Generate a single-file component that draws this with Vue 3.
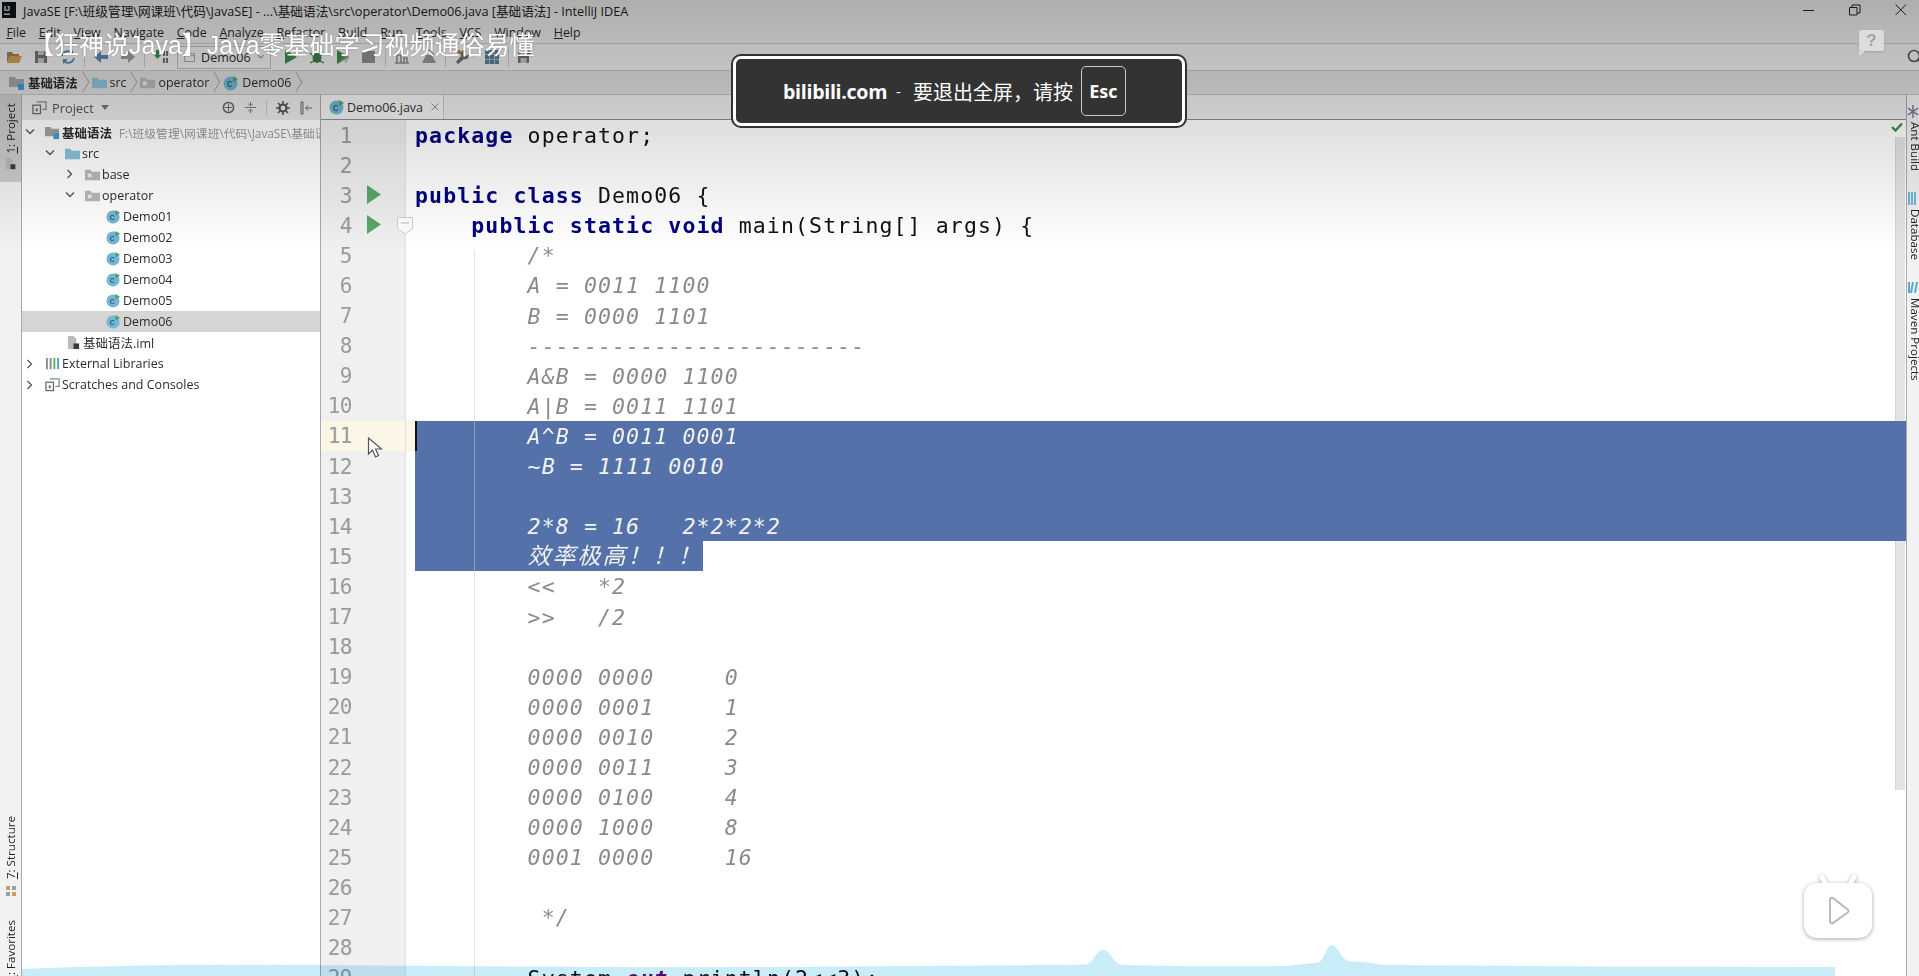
<script setup>
const menu = ['File','Edit','View','Navigate','Code','Analyze','Refactor','Build','Run','Tools','VCS','Window','Help']
const tree = [
  { pad: 1, arrow: 'down', icon: 'mod', text: '基础语法', bold: true, path: 'F:\\班级管理\\网课班\\代码\\JavaSE\\基础语法' },
  { pad: 21, arrow: 'down', icon: 'src', text: 'src' },
  { pad: 41, arrow: 'right', icon: 'pkg', text: 'base' },
  { pad: 41, arrow: 'down', icon: 'pkg', text: 'operator' },
  { pad: 62, arrow: 'none', icon: 'cls', text: 'Demo01' },
  { pad: 62, arrow: 'none', icon: 'cls', text: 'Demo02' },
  { pad: 62, arrow: 'none', icon: 'cls', text: 'Demo03' },
  { pad: 62, arrow: 'none', icon: 'cls', text: 'Demo04' },
  { pad: 62, arrow: 'none', icon: 'cls', text: 'Demo05' },
  { pad: 62, arrow: 'none', icon: 'cls', text: 'Demo06', active: true },
  { pad: 22, arrow: 'none', icon: 'iml', text: '基础语法.iml' },
  { pad: 1, arrow: 'right', icon: 'lib', text: 'External Libraries' },
  { pad: 1, arrow: 'right', icon: 'scr', text: 'Scratches and Consoles' }
]
const c = t => [[t, 'cm']]
const I = '        '
const lines = [
  [['package', 'kw'], [' operator;', '']],
  [],
  [['public class', 'kw'], [' Demo06 {', '']],
  [['    '], ['public static void', 'kw'], [' main(String[] args) {', '']],
  c(I + '/*'),
  c(I + 'A = 0011 1100'),
  c(I + 'B = 0000 1101'),
  c(I + '------------------------'),
  c(I + 'A&B = 0000 1100'),
  c(I + 'A|B = 0011 1101'),
  c(I + 'A^B = 0011 0001'),
  c(I + '~B = 1111 0010'),
  [],
  c(I + '2*8 = 16   2*2*2*2'),
  [[I, ''], ['效率极高！！！', 'cm cjk']],
  c(I + '<<   *2'),
  c(I + '>>   /2'),
  [],
  c(I + '0000 0000     0'),
  c(I + '0000 0001     1'),
  c(I + '0000 0010     2'),
  c(I + '0000 0011     3'),
  c(I + '0000 0100     4'),
  c(I + '0000 1000     8'),
  c(I + '0001 0000     16'),
  [],
  c(I + ' */'),
  [],
  [[I + 'System.', ''], ['out', 'st'], ['.println(2<<3);', '']]
].map((segs, i) => ({
  n: i + 1,
  segs,
  sel: i >= 10 && i <= 13,
  part: i === 14,
  cur: i === 10
}))
</script>

<template>
  <div class="page">
    <svg class="defs" width="0" height="0">
      <defs>
        <symbol id="cls" viewBox="0 0 16 16">
          <circle cx="7.5" cy="8.5" r="7" fill="#6fb8d8" />
          <text x="4" y="12" font-size="10.5" font-family="Liberation Sans, sans-serif" fill="#3b3b3b">c</text>
          <path d="M10 1v6l5-3z" fill="#4fa45f" />
        </symbol>
        <symbol id="src" viewBox="0 0 16 16">
          <path d="M0 3h6l1 2h9v9H0z" fill="#8bc3dd" />
        </symbol>
        <symbol id="pkg" viewBox="0 0 16 16">
          <path d="M0 3h6l1 2h9v9H0z" fill="#b6b9bd" />
          <rect x="3" y="7" width="4" height="4" fill="#eee" />
        </symbol>
        <symbol id="mod" viewBox="0 0 16 16">
          <path d="M0 2h6l1 2h8v8H0z" fill="#9fa4a9" />
          <rect x="9" y="9" width="6" height="6" fill="#3d9cd0" />
        </symbol>
        <symbol id="iml" viewBox="0 0 16 16">
          <path d="M2 1h6l3 3v11H2z" fill="#b8bbbf" />
          <rect x="8" y="9" width="6" height="6" fill="#3a3a3a" />
        </symbol>
        <symbol id="lib" viewBox="0 0 16 16">
          <path d="M1 2h2v12H1zM5 2h2v12H5z" fill="#7f8b95" />
          <path d="M9 2h2v12H9z" fill="#62b543" />
          <path d="M13 2h2v12h-2z" fill="#4aa0cc" />
        </symbol>
        <symbol id="scr" viewBox="0 0 16 16">
          <path d="M5 2h10v8h-4" fill="none" stroke="#80868c" stroke-width="1.3" />
          <rect x="1" y="5.5" width="8" height="9" fill="none" stroke="#5f666c" stroke-width="1.3" />
          <rect x="4" y="9" width="2" height="3" fill="#5f666c" />
        </symbol>
      </defs>
    </svg>

    <div class="ide">
      <div class="title">
        <svg class="ij" width="14" height="16" viewBox="0 0 14 16">
          <rect width="14" height="16" fill="#10121c" />
          <rect x="2" y="11.5" width="6" height="1.4" fill="#ddd" />
          <text x="2" y="9" font-size="7" font-weight="700" font-family="Liberation Sans, sans-serif" fill="#fff">IJ</text>
        </svg>
        <span class="title-text">JavaSE [F:\班级管理\网课班\代码\JavaSE] - ...\基础语法\src\operator\Demo06.java [基础语法] - IntelliJ IDEA</span>
        <span class="win">
          <svg width="12" height="12" viewBox="0 0 12 12"><path d="M0 6.5h11" stroke="#222" stroke-width="1" /></svg>
          <svg width="12" height="12" viewBox="0 0 12 12"><path d="M.5 3.5h7.5v7.5H.5zM3 3.5V1h8v8H8" fill="none" stroke="#222" stroke-width="1" /></svg>
          <svg width="12" height="12" viewBox="0 0 12 12"><path d="M.5.5l10.5 10.5M11 .5L.5 11" stroke="#222" stroke-width="1" /></svg>
        </span>
      </div>

      <div class="menu">
        <span v-for="m in menu" :key="m" class="menu-item"><u>{{ m[0] }}</u>{{ m.slice(1) }}</span>
      </div>

      <div class="toolbar">
        <div class="tg">
          <svg width="16" height="16" viewBox="0 0 16 16"><path d="M1 3h5l1 2h6v2H4l-3 7z" fill="#9c8350" /><path d="M4 7h12l-3 7H1z" fill="#d0a050" /></svg>
          <svg width="16" height="16" viewBox="0 0 16 16"><path d="M2 2h10l2 2v10H2z" fill="#707478" /><rect x="5" y="2" width="6" height="4" fill="#c4c4c4" /><rect x="5" y="9" width="6" height="5" fill="#c4c4c4" /></svg>
          <svg width="16" height="16" viewBox="0 0 16 16"><path d="M2 7a6 6 0 0 1 11-2M14 9a6 6 0 0 1-11 2" fill="none" stroke="#5b8fb0" stroke-width="1.8" /><path d="M13 1v5H8zM3 15v-5h5z" fill="#5b8fb0" /></svg>
        </div>
        <i class="sep"></i>
        <div class="tg">
          <svg width="16" height="16" viewBox="0 0 16 16"><path d="M8 2v4h7v4H8v4L1 8z" fill="#5a87ad" /></svg>
          <svg width="16" height="16" viewBox="0 0 16 16"><path d="M8 2v4H1v4h7v4l7-6z" fill="#9c9c9c" /></svg>
        </div>
        <i class="sep"></i>
        <svg width="16" height="16" viewBox="0 0 16 16"><path d="M3 1h3v5h2l-3.500 4L1 6h2z" fill="#3f8c4c" /><path d="M10 2h2v5h-2zM13 2h2v5h-2zM10 9h2v5h-2zM13 9h2v5h-2z" fill="#707070" /></svg>
        <div class="combo">
          <svg width="15" height="15" viewBox="0 0 15 15"><rect x="1" y="2" width="13" height="11" fill="none" stroke="#8a8a8a" /><path d="M1 5h13" stroke="#8a8a8a" /></svg>
          <span>Demo06</span>
          <svg width="10" height="8" viewBox="0 0 10 8"><path d="M1 1.500l4 4 4-4" fill="none" stroke="#555" stroke-width="1.200" /></svg>
        </div>
        <div class="tg run">
          <svg width="16" height="16" viewBox="0 0 16 16"><path d="M2 1l12 7-12 7z" fill="#3f8c4c" /></svg>
          <svg width="16" height="16" viewBox="0 0 16 16"><ellipse cx="8" cy="9" rx="4.500" ry="5" fill="#3f7d4a" /><path d="M1 4l4 3M15 4l-4 3M1 14l4-2M15 14l-4-2" stroke="#3f7d4a" stroke-width="1.300" /></svg>
          <svg width="16" height="16" viewBox="0 0 16 16"><path d="M2 1l12 7-12 7z" fill="#3f8c4c" /><path d="M8 8h6M6 11h6M8 5h3M10 14l4-6" stroke="#b4b4b4" stroke-width="1.200" /></svg>
          <svg width="16" height="16" viewBox="0 0 16 16"><rect x="1" y="2" width="13" height="12" fill="#8f8f8f" /></svg>
        </div>
        <i class="sep"></i>
        <div class="tg">
          <svg width="16" height="16" viewBox="0 0 16 16"><path d="M1 14h14M3 14V6h4v8M10 14V9h3v5" fill="none" stroke="#929292" stroke-width="1.600" /></svg>
          <svg width="16" height="16" viewBox="0 0 16 16"><path d="M1 14h14l-4-8H5z" fill="#979797" /><path d="M7 1l6 5" stroke="#979797" stroke-width="2" /></svg>
        </div>
        <i class="sep"></i>
        <div class="tg wide">
          <svg width="16" height="16" viewBox="0 0 16 16"><path d="M10 1a4 4 0 0 0-3 6l-5 6 2 2 6-5a4 4 0 0 0 5-5l-3 2-2-2 2-3z" fill="#6f6f6f" /><circle cx="5" cy="3" r="2" fill="#c07f2f" /></svg>
          <svg width="16" height="16" viewBox="0 0 16 16"><path d="M1 1h14v14H1z" fill="#4f7f9f" /><path d="M1 5.500h14M1 10.500h14M5.500 1v14M10.500 1v14" stroke="#b8b8b8" /></svg>
        </div>
        <i class="sep"></i>
        <svg width="16" height="16" viewBox="0 0 16 16"><path d="M1 3h9l2 2v9H1z" fill="#707478" /><rect x="3.500" y="3" width="5" height="3" fill="#c4c4c4" /><rect x="3.500" y="9" width="6" height="5" fill="#c4c4c4" /><path d="M11 1l4 3-4 3z" fill="#3f8c4c" /></svg>
        <svg class="search" width="16" height="16" viewBox="0 0 16 16"><circle cx="7" cy="7" r="5.500" fill="none" stroke="#5c5c5c" stroke-width="1.700" /><path d="M11 11l4 4" stroke="#5c5c5c" stroke-width="1.700" /></svg>
      </div>

      <div class="crumbs">
        <span class="crumb">
          <svg width="16" height="16" viewBox="0 0 16 16"><use href="#mod" /></svg>
          <b>基础语法</b>
        </span>
        <span class="crumb">
          <svg width="15" height="15" viewBox="0 0 16 16"><use href="#src" /></svg>
          <span>src</span>
        </span>
        <span class="crumb">
          <svg width="15" height="15" viewBox="0 0 16 16"><use href="#pkg" /></svg>
          <span>operator</span>
        </span>
        <span class="crumb">
          <svg width="16" height="16" viewBox="0 0 16 16"><use href="#cls" /></svg>
          <span>Demo06</span>
        </span>
      </div>

      <div class="body">
        <div class="lstrip">
          <div class="lstrip-on">
            <span class="vtext rev"><u>1</u>: Project</span>
            <svg width="13" height="13" viewBox="0 0 16 16"><use href="#iml" /></svg>
          </div>
          <div class="lstrip-low">
            <span class="vtext rev"><u>7</u>: Structure</span>
            <svg class="struct" width="12" height="12" viewBox="0 0 12 12"><path d="M1 1h4v4H1zM7 7h4v4H7z" fill="#c9a05a" /><path d="M7 1h4v4H7zM1 7h4v4H1z" fill="#9aa0a6" /></svg>
            <span class="vtext rev"><u>2</u>: Favorites</span>
          </div>
        </div>

        <div class="panel">
          <div class="panel-head">
            <svg width="15" height="15" viewBox="0 0 16 16"><use href="#scr" /></svg>
            <span class="panel-title">Project</span>
            <svg width="8" height="6" viewBox="0 0 8 6"><path d="M0 0h8L4 5z" fill="#777" /></svg>
            <span class="panel-tools">
              <svg width="13" height="13" viewBox="0 0 14 14"><circle cx="7" cy="7" r="5.500" fill="none" stroke="#666" stroke-width="1.600" /><path d="M7 3v8M3 7h8" stroke="#666" /></svg>
              <svg width="13" height="13" viewBox="0 0 14 14"><path d="M1 7h12M7 1v4M7 13V9M4.500 3L7 5l2.500-2M4.500 11L7 9l2.500 2" fill="none" stroke="#777" /></svg>
              <i class="sep short"></i>
              <svg width="14" height="14" viewBox="0 0 14 14"><circle cx="7" cy="7" r="3.500" fill="none" stroke="#555" stroke-width="2.200" /><path d="M7 0v3M7 11v3M0 7h3M11 7h3M2 2l2 2M10 10l2 2M12 2l-2 2M4 10l-2 2" stroke="#555" stroke-width="1.600" /></svg>
              <svg width="14" height="14" viewBox="0 0 14 14"><path d="M2 1v12M2 1h2v12H2M13 7H7M9 4.500L6.500 7 9 9.500" fill="none" stroke="#666" /></svg>
            </span>
          </div>
          <div class="tree">
            <div v-for="r in tree" :key="r.text" class="row" :class="{ active: r.active }" :style="{ paddingLeft: r.pad + 'px' }">
              <span class="arrow">
                <svg v-if="r.arrow === 'down'" width="10" height="8" viewBox="0 0 10 8"><path d="M1 1.500l4 4 4-4" fill="none" stroke="#555" stroke-width="1.300" /></svg>
                <svg v-if="r.arrow === 'right'" width="8" height="10" viewBox="0 0 8 10"><path d="M1.500 1l4 4-4 4" fill="none" stroke="#555" stroke-width="1.300" /></svg>
              </span>
              <svg class="row-icon" width="15" height="15" viewBox="0 0 16 16"><use :href="'#' + r.icon" /></svg>
              <span class="row-text" :class="{ bold: r.bold }">{{ r.text }}</span>
              <span v-if="r.path" class="row-path">{{ r.path }}</span>
            </div>
          </div>
        </div>

        <div class="main">
          <div class="tabs">
            <div class="tab">
              <svg width="16" height="16" viewBox="0 0 16 16"><use href="#cls" /></svg>
              <span>Demo06.java</span>
              <svg width="8" height="8" viewBox="0 0 8 8"><path d="M.5.5l7 7M7.500.5l-7 7" stroke="#8f8f8f" /></svg>
            </div>
          </div>
          <div class="editor">
            <div class="scroll"></div>
            <div class="guide"></div>
            <svg class="check" width="12" height="10" viewBox="0 0 12 10"><path d="M1 5l3.500 3.500L11 1.500" fill="none" stroke="#3f8c4c" stroke-width="2.400" /></svg>
            <div v-for="l in lines" :key="l.n" class="line">
              <div class="gutter" :class="{ cur: l.cur }">
                <span class="num">{{ l.n }}</span>
                <svg v-if="l.n === 3 || l.n === 4" class="play" width="14" height="19" viewBox="0 0 14 19"><path d="M0 0l14 9.500L0 19z" fill="#59a869" /></svg>
                <svg v-if="l.n === 4" class="fold" width="16" height="18" viewBox="0 0 16 18"><path d="M.5.500h15v11L8 17 .5 11.500z" fill="#fdfdfd" stroke="#d0d0d0" /><path d="M4 6h8" stroke="#b8b8b8" /></svg>
              </div>
              <div class="code" :class="{ sel: l.sel, cur: l.cur }">
                <span class="code-inner" :class="{ selpart: l.part }">
                  <span v-for="(s, i) in l.segs" :key="i" :class="s[1]">{{ s[0] }}</span>
                </span>
              </div>
            </div>
          </div>
        </div>

        <div class="rstrip">
          <div class="ritem">
            <svg width="10" height="13" viewBox="0 0 10 13"><path d="M5 0v13M0 3l10 7M10 3L0 10" stroke="#8a6fa0" stroke-width="1.500" /></svg>
            <span class="vtext">Ant Build</span>
          </div>
          <div class="ritem">
            <svg width="10" height="13" viewBox="0 0 10 13"><path d="M1 0v13M4 0v13M7 0v13" stroke="#6fb8d8" stroke-width="2" /></svg>
            <span class="vtext">Database</span>
          </div>
          <div class="ritem">
            <svg width="10" height="13" viewBox="0 0 10 13"><path d="M9 1L7 12M5 1L3 12M1 1V12" stroke="#55aacc" stroke-width="2" /></svg>
            <span class="vtext">Maven Projects</span>
          </div>
        </div>
      </div>
    </div>

    <div class="shade"></div>

    <svg class="wave" width="1919" height="40" viewBox="0 0 1919 40">
      <path d="M22 33 Q150 28 300 29 T600 31 T900 30 Q1070 29 1086 28.500 C1094 28 1095 14 1103 14 C1111 14 1112 27 1122 29 Q1200 31 1287 30 Q1310 27 1318 26.500 C1324 26 1326 9 1332 9 C1338 9 1340 22 1348 25 Q1365 26 1385 29 Q1600 31 1835 31 V40 H22 Z" fill="#c9ecf9" />
    </svg>

    <svg class="cursor" width="16" height="22" viewBox="0 0 16 22">
      <path d="M1.500 1v16l4-4 3 7 3-1.500-3-6.500h6z" fill="#fff" stroke="#555" stroke-width="1.200" />
    </svg>

    <div class="subtitle">【狂神说Java】Java零基础学习视频通俗易懂</div>

    <div class="help">?</div>

    <div class="notice">
      <b class="host">bilibili.com</b>
      <span class="dash">-</span>
      <span class="msg">要退出全屏，请按</span>
      <b class="esc">Esc</b>
    </div>

    <div class="tv">
      <svg width="70" height="68" viewBox="0 0 70 68">
        <path d="M24 14l-5-10M46 14l5-10" stroke="#fff" stroke-width="5" stroke-linecap="round" />
        <rect x="1" y="10" width="68" height="55" rx="13" fill="#fff" />
        <path d="M27 27v21c0 2 2 3 3 2l14-10c2-1 2-3 0-4L30 25c-1-1-3 0-3 2z" fill="#fff" stroke="#b5b5b5" stroke-width="1.800" />
      </svg>
    </div>
  </div>
</template>

<style scoped>
.page {
  position: relative;
  width: 100%;
  height: 976px;
  overflow: hidden;
  background: #fff;
  font-family: "Open Sans", "Noto Sans CJK SC", sans-serif;
  color: #2c2c2c;
}
.defs { position: absolute; }
.ide {
  display: flex;
  flex-direction: column;
  height: 100%;
  filter: blur(0.45px);
}
.title {
  display: flex;
  align-items: center;
  height: 22px;
  padding: 0 0 2px 2px;
  box-sizing: border-box;
  background: #efefef;
  font-size: 12.66px;
  flex: none;
}
.title-text { margin-left: 7px; color: #222; white-space: nowrap; }
.ij { flex: none; }
.win { display: flex; gap: 34px; margin-left: auto; padding-right: 12px; }
.menu {
  display: flex;
  align-items: center;
  height: 21px;
  background: #eee;
  font-size: 12.4px;
  border-bottom: 1px solid #ccc;
  flex: none;
}
.menu-item { padding: 0 6.4px; white-space: nowrap; }
.toolbar {
  display: flex;
  align-items: center;
  gap: 8px;
  height: 26px;
  padding-left: 6px;
  background: #f0f0f0;
  border-bottom: 1px solid #c8c8c8;
  flex: none;
}
.tg { display: flex; align-items: center; gap: 11px; }
.tg.run { margin-left: 4px; gap: 10px; }
.tg.wide { gap: 14px; }
.sep { display: block; width: 1px; height: 20px; background: #c9c9c9; }
.sep.short { height: 16px; }
.combo {
  display: flex;
  align-items: center;
  gap: 6px;
  width: 94px;
  height: 23px;
  box-sizing: border-box;
  padding: 0 6px;
  border: 1px solid #bdbdbd;
  font-size: 12.5px;
}
.search { margin-left: auto; margin-right: -4px; }
.crumbs {
  display: flex;
  align-items: center;
  height: 23px;
  padding-left: 9px;
  background: #dedede;
  border-bottom: 1px solid #c0c0c0;
  font-size: 12.4px;
  flex: none;
}
.crumb {
  display: flex;
  align-items: center;
  gap: 3px;
  height: 100%;
  padding-right: 14px;
  position: relative;
}
.crumb::after {
  content: "";
  position: absolute;
  right: 3px;
  top: 5px;
  width: 11px;
  height: 11px;
  border-top: 1px solid #a5a5a5;
  border-right: 1px solid #a5a5a5;
  transform: rotate(45deg) skew(14deg, 14deg);
}
.body { display: flex; flex: 1; min-height: 0; }
.lstrip {
  display: flex;
  flex-direction: column;
  justify-content: space-between;
  width: 21px;
  background: #f2f2f2;
  border-right: 1px solid #aaa;
  flex: none;
}
.lstrip-on {
  display: flex;
  flex-direction: column;
  align-items: center;
  gap: 3px;
  height: 87px;
  padding-top: 8px;
  box-sizing: border-box;
  background: #cccccc;
}
.lstrip-low {
  display: flex;
  flex-direction: column;
  align-items: center;
  margin-bottom: -6px;
}
.struct { margin: 6px 0 23px; }
.vtext {
  writing-mode: vertical-rl;
  font-size: 11.6px;
  white-space: nowrap;
  color: #222;
}
.rev { transform: rotate(180deg); }
.panel {
  display: flex;
  flex-direction: column;
  width: 298px;
  border-right: 1px solid #aaa;
  flex: none;
  overflow: hidden;
}
.panel-head {
  display: flex;
  align-items: center;
  gap: 5px;
  height: 25px;
  padding-left: 10px;
  background: #eaeaea;
  font-size: 12.8px;
  color: #555;
  flex: none;
}
.panel-tools {
  display: flex;
  align-items: center;
  gap: 9px;
  margin-left: auto;
  padding-right: 7px;
}
.panel-title { margin-right: 2px; }
.tree { padding-top: 1.5px; }
.row {
  display: flex;
  align-items: center;
  height: 21.05px;
  font-size: 12.5px;
  white-space: nowrap;
}
.row.active { background: #d5d5d5; }
.arrow { display: flex; align-items: center; justify-content: center; width: 22px; padding-right: 8px; box-sizing: border-box; flex: none; }
.row-icon { flex: none; margin-right: 2px; }
.bold { font-weight: 700; }
.row-path { margin-left: 7px; color: #9a9a9a; font-size: 11.8px; }
.main { display: flex; flex-direction: column; flex: 1; min-width: 0; }
.tabs {
  height: 25px;
  background: #ececec;
  border-bottom: 1px solid #8d8d8d;
  box-sizing: border-box;
  flex: none;
}
.tab {
  display: flex;
  align-items: center;
  gap: 2px;
  width: 123px;
  height: 100%;
  padding-left: 8px;
  box-sizing: border-box;
  border-right: 1px solid #c8c8c8;
  background: #f3f3f3;
  font-size: 12.5px;
  color: #333;
}
.tab svg:last-child { margin-left: 6px; }
.editor { position: relative; flex: 1; background: #fff; }
.scroll {
  position: absolute;
  top: 17px;
  right: 1px;
  width: 9px;
  height: 653px;
  background: #e4e4e4;
  border-left: 1px solid #d6d6d6;
}
.guide {
  position: absolute;
  top: 130px;
  bottom: 0;
  left: 153px;
  width: 1px;
  background: rgba(200, 200, 200, 0.5);
  z-index: 1;
}
.check { position: absolute; top: 2px; right: 3px; }
.line { position: relative; display: flex; height: 30.1px; }
.gutter {
  position: relative;
  display: flex;
  align-items: center;
  width: 85px;
  padding-top: 1px;
  box-sizing: border-box;
  background: #f0f0f0;
  border-right: 1px solid #e2e2e2;
  flex: none;
}
.gutter.cur { background: #fbf6e6; }
.num {
  width: 31px;
  text-align: right;
  font: 21px "DejaVu Sans Mono", monospace;
  letter-spacing: -0.5px;
  color: #9a9a9a;
}
.play { position: absolute; left: 46px; top: 5px; }
.fold { position: absolute; left: 76px; top: 7px; z-index: 1; }
.code {
  position: relative;
  flex: 1;
  padding-left: 9px;
  white-space: pre;
  font: 21.5px/30.1px "DejaVu Sans Mono", "Noto Sans CJK SC", monospace;
  letter-spacing: 1.13px;
  color: #111;
}
.code.cur { background-color: #fbf6e6; }
.code.sel {
  background-image: linear-gradient(#5472a9, #5472a9);
  background-position: 9px 0;
  background-repeat: no-repeat;
  color: #f4f4f4;
}
.code.sel .cm { color: #f2f2f2; }
.code.cur::before {
  content: "";
  position: absolute;
  left: 9px;
  top: 0;
  width: 2px;
  height: 30px;
  background: #111;
}
.code-inner {
  display: inline-block;
  position: relative;
  top: 1px;
  height: 100%;
  vertical-align: top;
}
.selpart {
  top: 0;
  width: 288px;
  background: #5472a9;
  overflow: hidden;
}
.selpart .cm { color: #f0f0f0; }
.cm { font-style: italic; color: #8a8a8a; }
.cm.cjk { font-size: 23px; letter-spacing: 2px; }
.kw { font-weight: 700; color: #000080; }
.st { font-weight: 700; font-style: italic; color: #660e7a; }
.rstrip {
  display: flex;
  flex-direction: column;
  gap: 21px;
  width: 13px;
  padding: 10px 0 0 1px;
  box-sizing: border-box;
  border-left: 1px solid #aaa;
  background: #f2f2f2;
  overflow: hidden;
  flex: none;
}
.ritem { display: flex; flex-direction: column; align-items: flex-start; gap: 4px; }
.shade {
  position: absolute;
  inset: 0 0 auto 0;
  height: 250px;
  background: linear-gradient(rgba(0, 0, 0, 0.27), rgba(0, 0, 0, 0.13) 48%, rgba(0, 0, 0, 0));
  pointer-events: none;
}
.wave { position: absolute; left: 0; bottom: 0; mix-blend-mode: multiply; }
.cursor { position: absolute; left: 367px; top: 437px; }
.subtitle {
  position: absolute;
  left: 29px;
  top: 28px;
  font: 25px/34px "Liberation Sans", "Noto Sans CJK SC", sans-serif;
  color: #fff;
  white-space: nowrap;
  text-shadow: 0 0 2px rgba(0, 0, 0, 0.25);
}
.help {
  position: absolute;
  left: 1859px;
  top: 30px;
  width: 25px;
  height: 21px;
  border-radius: 2px;
  background: #dcdcdc;
  color: #a2a2a2;
  font: 700 17px/21px "Liberation Sans", sans-serif;
  text-align: center;
  box-shadow: 0 1px 2px rgba(0, 0, 0, 0.15);
}
.help::after {
  content: "";
  position: absolute;
  left: 0;
  top: 21px;
  border-top: 5px solid #dcdcdc;
  border-right: 6px solid transparent;
}
.notice {
  position: absolute;
  left: 732px;
  top: 55px;
  display: flex;
  align-items: center;
  width: 454px;
  height: 72px;
  padding-left: 47px;
  box-sizing: border-box;
  border: 4px solid #fff;
  border-radius: 9px;
  outline: 2px solid #333;
  outline-offset: -1px;
  background: #333;
  color: #fff;
  font-family: "Open Sans", "Noto Sans CJK SC", sans-serif;
}
.host { font-size: 19.6px; letter-spacing: -0.3px; }
.dash { margin: 0 12px 0 9px; font-size: 15px; }
.msg { font-size: 20px; }
.esc {
  display: flex;
  align-items: center;
  justify-content: center;
  width: 45px;
  height: 50px;
  margin-left: 8px;
  box-sizing: border-box;
  border: 1px solid #c8c8c8;
  border-radius: 5px;
  font-size: 18px;
}
.tv {
  position: absolute;
  left: 1803px;
  top: 873px;
  filter: drop-shadow(0 1px 2px rgba(0, 0, 0, 0.35));
}
</style>

<style>
html, body { margin: 0; overflow: hidden; }
</style>
